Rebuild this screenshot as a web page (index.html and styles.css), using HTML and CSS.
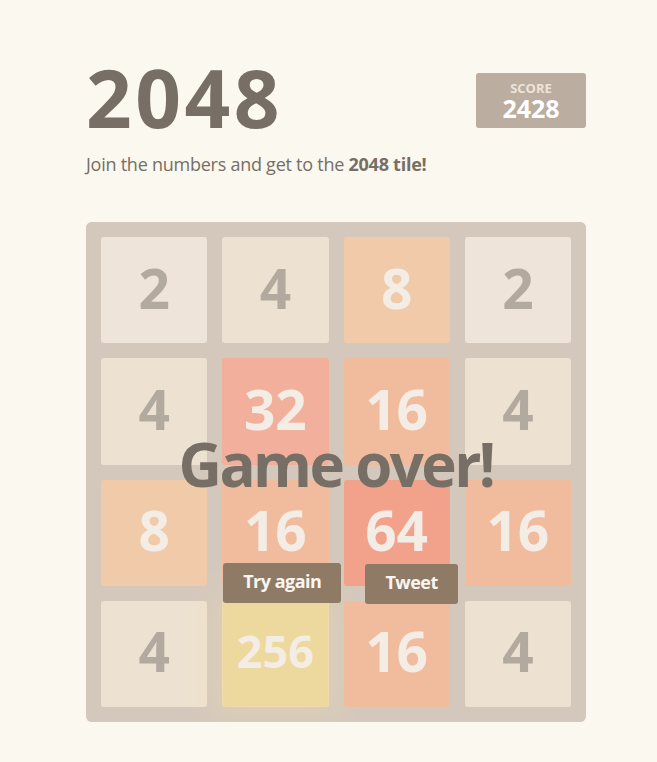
FILE: index.html
```html
<!DOCTYPE html>
<html lang="en">
<head>
<meta charset="utf-8">
<title>2048</title>
<link rel="stylesheet" href="styles.css">
</head>
<body>
<div class="container">
  <div class="heading">
    <h1 class="title">2048</h1>
    <div class="score">
      <span class="score-label">SCORE</span>
      <span class="score-value">2428</span>
    </div>
  </div>
  <p class="intro">Join the numbers and get to the <strong>2048 tile!</strong></p>

  <div class="board">
    <div class="grid">
      <div class="tile t2">2</div>
      <div class="tile t4">4</div>
      <div class="tile t8">8</div>
      <div class="tile t2">2</div>

      <div class="tile t4">4</div>
      <div class="tile t32">32</div>
      <div class="tile t16">16</div>
      <div class="tile t4">4</div>

      <div class="tile t8">8</div>
      <div class="tile t16">16</div>
      <div class="tile t64">64</div>
      <div class="tile t16">16</div>

      <div class="tile t4">4</div>
      <div class="tile t256">256</div>
      <div class="tile t16">16</div>
      <div class="tile t4">4</div>
    </div>

    <div class="game-message">
      <p class="message-text">Game over!</p>
      <div class="actions">
        <a class="button retry">Try again</a>
        <a class="button tweet">Tweet</a>
      </div>
    </div>
  </div>
</div>
</body>
</html>
```

FILE: styles.css
```css
html, body {
  margin: 0;
  padding: 0;
}

body {
  background: #faf8ef;
  color: #776e65;
  font-family: "Open Sans", "Noto Sans", Arial, sans-serif;
  font-size: 18px;
}

.container {
  width: 500px;
  margin-left: 86px;
  padding-top: 57px;
}

/* Title row */
.heading {
  display: flex;
  justify-content: space-between;
  align-items: flex-start;
}

.title {
  margin: 0;
  font-size: 80px;
  font-weight: 700;
  line-height: 80px;
  color: #776e65;
  letter-spacing: 3.5px;
}

.score {
  margin-top: 16px;
  width: 110px;
  height: 55px;
  box-sizing: border-box;
  background: #bbada0;
  border-radius: 3px;
  display: flex;
  flex-direction: column;
  align-items: center;
  padding-top: 7px;
}

.score-label {
  font-size: 13px;
  font-weight: 700;
  line-height: 16px;
  color: #eee4da;
}

.score-value {
  font-size: 25px;
  font-weight: 700;
  line-height: 25px;
  color: #ffffff;
}

.intro {
  margin: 12px 0 0;
  line-height: 30px;
  font-size: 18px;
  letter-spacing: -0.25px;
}

.intro strong {
  font-weight: 700;
}

/* Board */
.board {
  position: relative;
  margin-top: 43px;
  width: 500px;
  height: 500px;
}

.grid {
  box-sizing: border-box;
  width: 500px;
  height: 500px;
  padding: 15px;
  background: #bbada0;
  border-radius: 6px;
  display: grid;
  grid-template-columns: repeat(4, 1fr);
  grid-template-rows: repeat(4, 1fr);
  gap: 15px;
}

.tile {
  box-sizing: border-box;
  padding-bottom: 6px;
  border-radius: 3px;
  display: flex;
  align-items: center;
  justify-content: center;
  font-weight: 700;
  font-size: 55px;
  color: #f9f6f2;
}

.t2 { background: #eee4da; color: #776e65; }
.t4 { background: #ede0c8; color: #776e65; }
.t8 { background: #f2b179; }
.t16 { background: #f59563; }
.t32 { background: #f67c5f; }
.t64 { background: #f65e3b; }
.t256 {
  background: #edcc61;
  font-size: 45px;
  box-shadow: 0 0 30px 10px rgba(243, 215, 116, 0.32), inset 0 0 0 1px rgba(255, 255, 255, 0.19);
}

/* Faded overlay shown when no moves remain */
.game-message {
  position: absolute;
  inset: 0;
  background: rgba(238, 228, 218, 0.5);
  border-radius: 6px;
  display: flex;
  flex-direction: column;
  align-items: center;
}

.message-text {
  margin: 212px 0 0;
  height: 60px;
  font-size: 60px;
  line-height: 60px;
  font-weight: 700;
  color: #776e65;
  letter-spacing: -2.6px;
}

.actions {
  margin-top: 69px;
  display: flex;
  gap: 24px;
  padding-left: 9px;
}

.button {
  display: block;
  height: 40px;
  line-height: 37px;
  padding: 0 20px;
  background: #8f7a66;
  border-radius: 3px;
  color: #f9f6f2;
  font-size: 18px;
  font-weight: 700;
  letter-spacing: -0.5px;
  text-decoration: none;
}

.tweet {
  margin-top: 1px;
}
```
